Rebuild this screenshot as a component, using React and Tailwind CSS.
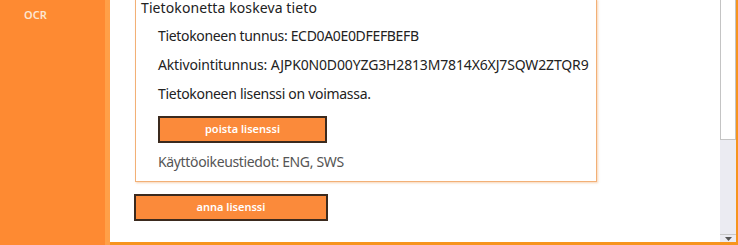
export default function App() {
  const font = { fontFamily: '"Noto Sans", "Open Sans", Arial, sans-serif' };
  return (
    <div className="w-[738px] h-[245px] flex overflow-hidden bg-white" style={font}>
      <div className="w-[105px] h-full bg-[#fe8a32] shrink-0">
        <div className="pl-[24px] pt-[8px] text-[11px] font-semibold text-[#fde6d0] leading-[14px]">OCR</div>
      </div>
      <div className="w-[5px] h-full bg-[#ffa048] shrink-0" />
      <div className="flex-1 h-full flex border-r-[2px] border-b-[3px] border-[#f7941d] overflow-hidden">
        <div className="flex-1 overflow-hidden">
          <div className="ml-[25px] mt-[-1px] w-[462px] border border-[#f2b076] bg-white pl-[5px] pb-[5px] shadow-[1px_1px_2px_rgba(240,170,110,0.5)]">
            <div className="h-[21px] pt-[1px] leading-[14px] text-[14px] tracking-[0.1px] text-[#222] whitespace-nowrap">Tietokonetta koskeva tieto</div>
            <div className="pl-[17px] text-[14px] text-[#222] whitespace-nowrap">
              <div className="h-[29px] flex items-center tracking-[-0.33px]">Tietokoneen tunnus: ECD0A0E0DFEFBEFB</div>
              <div className="h-[29px] flex items-center tracking-[-0.15px]">Aktivointitunnus: AJPK0N0D00YZG3H2813M7814X6XJ7SQW2ZTQR9</div>
              <div className="h-[29px] flex items-center tracking-[-0.3px]">Tietokoneen lisenssi on voimassa.</div>
              <button className="mt-[8px] w-[169px] h-[27px] bg-[#fb8a3a] border-[2px] border-[#3b2a1e] text-white text-[11px] font-semibold flex items-center justify-center">poista lisenssi</button>
              <div className="mt-[4px] h-[29px] flex items-center tracking-[-0.35px] text-[#555]">Käyttöoikeustiedot: ENG, SWS</div>
            </div>
          </div>
          <button className="ml-[24px] mt-[12px] w-[194px] h-[27px] bg-[#fb8a3a] border-[2px] border-[#3b2a1e] text-white text-[11px] font-semibold flex items-center justify-center">anna lisenssi</button>
        </div>
        <div className="w-[16px] h-full bg-[#ebebf2] flex flex-col shrink-0">
          <div className="h-[140px] bg-white border-l border-r border-b border-[#c4c4c4]" />
          <div className="flex-1" />
          <div className="h-[8px] border-t border-[#c8c8c8] flex items-center justify-center">
            <svg width="7" height="4" viewBox="0 0 7 4"><path d="M0 0 L7 0 L3.5 4 Z" fill="#555" /></svg>
          </div>
        </div>
      </div>
    </div>
  );
}
